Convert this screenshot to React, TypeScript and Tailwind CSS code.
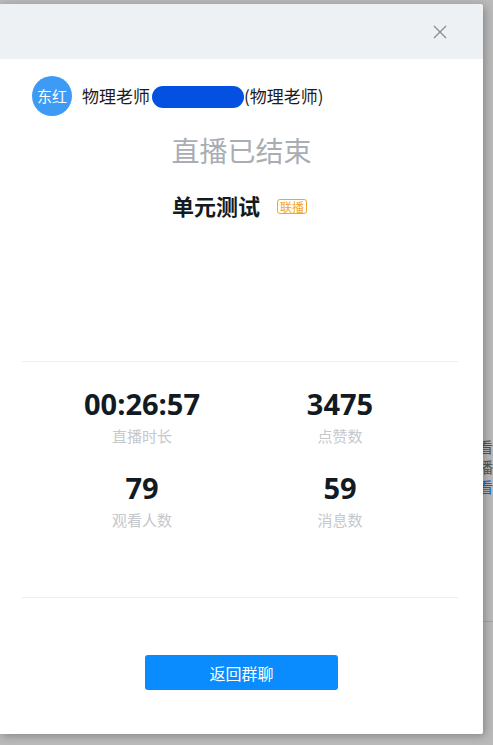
import React from "react";

const cjk = { fontFamily: '"Noto Sans CJK SC", "Noto Sans", sans-serif' };
const num = { fontFamily: '"Open Sans", "Noto Sans", sans-serif' };

const stats = [
  { value: "00:26:57", label: "直播时长" },
  { value: "3475", label: "点赞数" },
  { value: "79", label: "观看人数" },
  { value: "59", label: "消息数" },
];

const App = () => {
  return (
    <div className="w-[493px] h-[745px] bg-[#bababa] flex overflow-hidden" style={cjk}>
      <div className="mt-[4px] h-[730px] w-[483px] shrink-0 bg-white rounded-tr-[3px] rounded-br-[2px] shadow-[2px_2px_8px_rgba(0,0,0,0.28)] relative z-10 flex flex-col">
        <div className="h-[55px] bg-[#eef1f4] rounded-tr-[3px] flex items-center justify-end pr-[36px]">
          <svg width="14" height="14" viewBox="0 0 14 14" className="mt-[1px]">
            <path d="M1 1L13 13M13 1L1 13" stroke="#8a9099" strokeWidth="1.4" />
          </svg>
        </div>

        <div className="mt-[17px] ml-[32px] h-[40px] flex items-center">
          <div className="w-[40px] h-[40px] rounded-full bg-[#3d9bf5] text-white text-[15px] flex items-center justify-center">
            东红
          </div>
          <div className="ml-[10px] flex items-center text-[17px] text-[#1c1c1c]">
            <span>物理老师</span>
            <span className="ml-[2px] w-[92px] h-[22px] rounded-full bg-[#0451e1] mt-[2px]" />
            <span>(物理老师)</span>
          </div>
        </div>

        <div className="mt-[17px] h-[34px] leading-[34px] text-[28px] text-[#a9aeb4] text-center">
          直播已结束
        </div>

        <div className="mt-[24px] h-[28px] flex items-center justify-center gap-[17px] pr-[4px]">
          <span className="text-[22px] font-bold text-[#141a21] leading-[28px]">单元测试</span>
          <span className="text-[12px] leading-[13px] px-[2px] border border-[#f5a623] text-[#f5a623] rounded-[3px] mt-[2px]">
            联播
          </span>
        </div>

        <div className="mt-[142px] ml-[22px] mr-[25px] h-px bg-[#efefef]" />

        <div className="ml-[43px] w-[396px] grid grid-cols-2 gap-y-[24px] mt-[24px]">
          {stats.map((s) => (
            <div key={s.label} className="flex flex-col items-center">
              <div className="h-[36px] leading-[36px] text-[29px] font-bold text-[#121a24]" style={num}>
                {s.value}
              </div>
              <div className="mt-[4px] h-[20px] leading-[20px] text-[15px] text-[#c5c8cd]">{s.label}</div>
            </div>
          ))}
        </div>

        <div className="mt-[67px] ml-[22px] mr-[25px] h-px bg-[#efefef]" />

        <button className="mt-[57px] mx-auto w-[193px] h-[35px] rounded-[3px] bg-[#0a8cff] text-white text-[16px] flex items-center justify-center">
          返回群聊
        </button>
      </div>

      <div className="flex-1 overflow-hidden relative">
        <div className="absolute left-[-5px] top-[437px] flex flex-col text-[15px] leading-[20px]">
          <span className="text-[#555]">看</span>
          <span className="text-[#555]">播</span>
          <span className="text-[#1166dd]">看</span>
        </div>
        <div className="absolute left-0 right-0 top-[621px] h-px bg-[#a6a6a6]" />
      </div>
    </div>
  );
};

export default App;
